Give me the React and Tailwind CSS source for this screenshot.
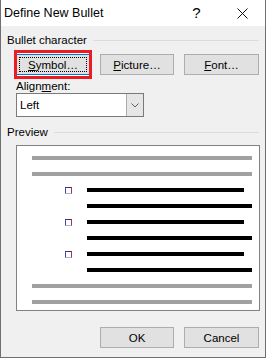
import React from "react";

const Btn = ({ children, w = "w-[74px]" }) => (
  <button className={`${w} h-[21px] border border-[#adadad] bg-[#e1e1e1] flex items-center justify-center`}>
    {children}
  </button>
);

const GrayLine = () => <div className="h-[4px] bg-[#a0a0a0]" />;

const BulletRow = () => (
  <div className="h-[4px] flex items-center">
    <div className="ml-[33px] w-[7px] h-[7px] shrink-0 border border-t-[#3a3a58] border-l-[#3050b0] border-r-[#a8306c] border-b-[#b4b4b4]" />
    <div className="ml-[15px] w-[157px] h-[4px] bg-black" />
  </div>
);

const LongRow = () => (
  <div className="h-[4px] flex">
    <div className="ml-[55px] flex-1 h-[4px] bg-black" />
  </div>
);

export default function App() {
  return (
    <div className="w-[266px] h-[358px] border-x border-b border-[#6f6f6f] flex flex-col bg-[#f0f0f0] font-['Liberation_Sans',Arial,sans-serif] text-[11.5px] leading-[14px] text-black">
      {/* Title bar */}
      <div className="h-[26px] bg-white flex items-center text-[12.5px]">
        <span className="pl-[3px]">Define New Bullet</span>
        <span className="ml-auto w-[45px] text-center text-[15px] leading-[16px]">?</span>
        <div className="w-[46px] flex justify-center">
          <svg width="11" height="11" viewBox="0 0 11 11">
            <path d="M0.5 0.5 L10.5 10.5 M10.5 0.5 L0.5 10.5" stroke="#111" strokeWidth="1" fill="none" />
          </svg>
        </div>
      </div>

      <div className="px-[6px] flex flex-col">
        {/* Bullet character */}
        <div className="mt-[7px] h-[14px] flex items-center gap-[6px]">
          <span>Bullet character</span>
          <div className="flex-1 h-px bg-[#dcdcdc]" />
        </div>
        <div className="mt-[7px] pl-[9px] flex gap-[10px]">
          <div className="relative">
            <button className="relative w-[74px] h-[21px] border border-[#0078d7] bg-[#e1e1e1] shadow-[0_0_0_1px_#fff] flex items-center justify-center">
              <span className="absolute inset-[2px] border border-dotted border-black" />
              <span><u>S</u>ymbol…</span>
            </button>
            <div className="absolute -top-[4px] -bottom-[4px] -left-[2px] -right-[2px] border-[3px] border-[#ed1c24] pointer-events-none" />
          </div>
          <Btn><span><u>P</u>icture…</span></Btn>
          <Btn w="w-[75px]"><span><u>F</u>ont…</span></Btn>
        </div>

        {/* Alignment */}
        <div className="mt-[4px] pl-[9px]">
          Align<u>m</u>ent:
        </div>
        <div className="ml-[9px] w-[128px] h-[24px] border border-[#7a7a7a] bg-white flex">
          <div className="flex-1 flex items-center pl-[3px]">Left</div>
          <div className="w-[17px] border-l border-[#acacac] bg-[#e6e6e6] flex items-center justify-center">
            <svg width="8" height="5" viewBox="0 0 8 5">
              <path d="M0.5 0.5 L4 4 L7.5 0.5" stroke="#606060" strokeWidth="1" fill="none" />
            </svg>
          </div>
        </div>

        {/* Preview */}
        <div className="mt-[8px] h-[14px] flex items-center gap-[6px]">
          <span>Preview</span>
          <div className="flex-1 h-px bg-[#dcdcdc]" />
        </div>
        <div className="mt-[6px] ml-[9px] w-[244px] h-[166px] border border-[#828282] bg-white pt-[10px] pl-[15px] pr-[7px] flex flex-col gap-[12px]">
          <GrayLine />
          <GrayLine />
          <BulletRow />
          <LongRow />
          <BulletRow />
          <LongRow />
          <BulletRow />
          <LongRow />
          <GrayLine />
          <GrayLine />
        </div>

        {/* Footer */}
        <div className="mt-[16px] flex justify-end gap-[10px]">
          <Btn>OK</Btn>
          <Btn w="w-[75px]">Cancel</Btn>
        </div>
      </div>
    </div>
  );
}
